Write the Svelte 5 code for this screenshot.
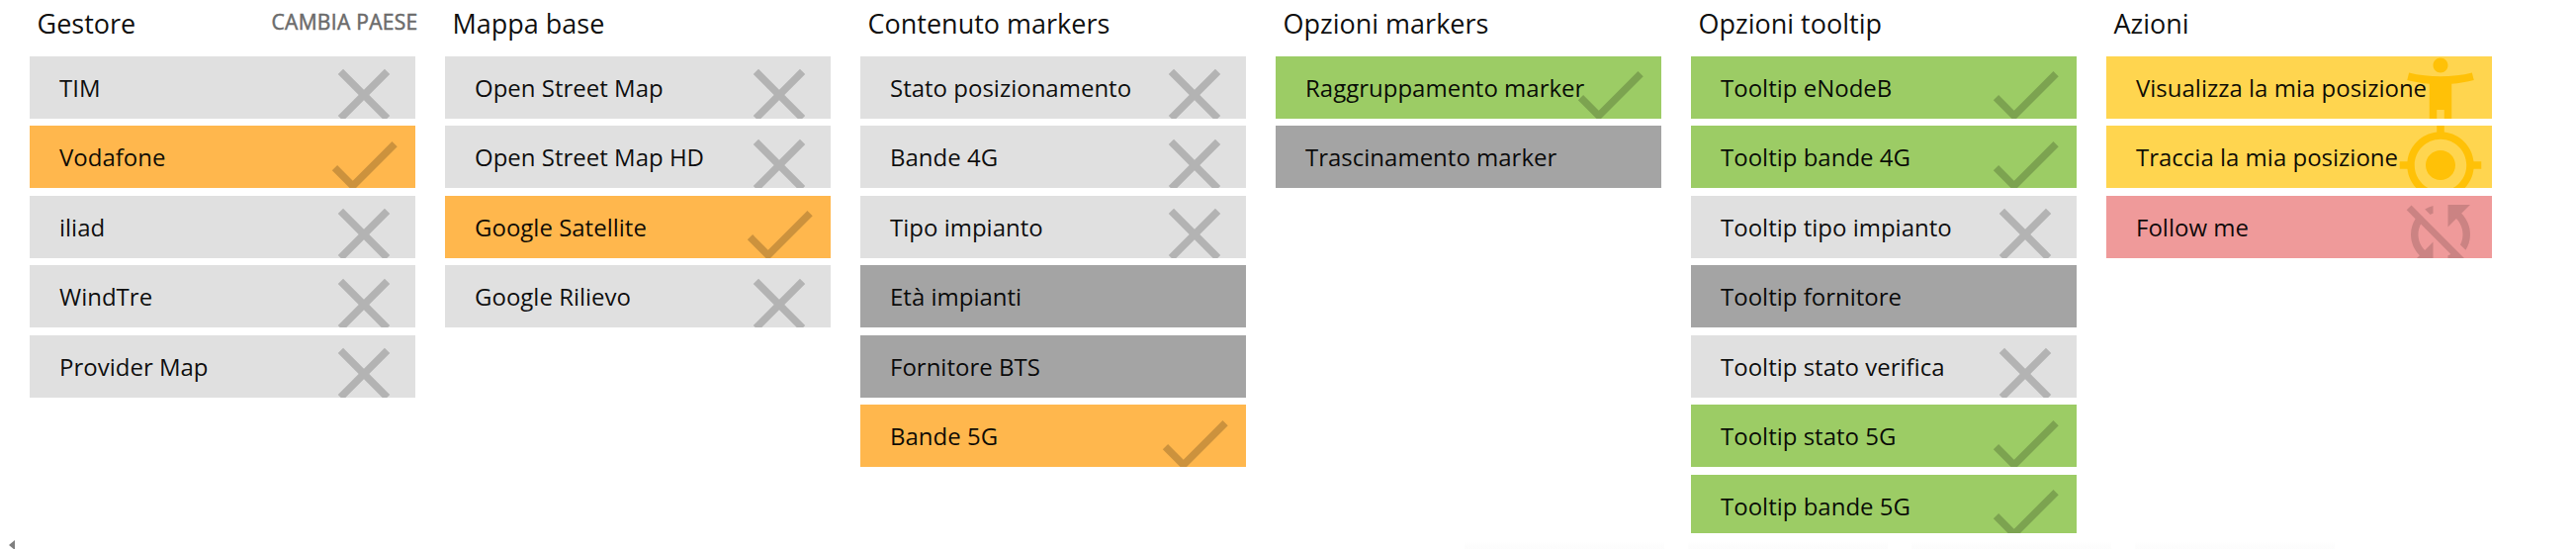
<script>
  const icons = {
    off: 'M19 6.41L17.59 5 12 10.59 6.41 5 5 6.41 10.59 12 5 17.59 6.41 19 12 13.41 17.59 19 19 17.59 13.41 12z',
    on: 'M9 16.17L4.83 12l-1.42 1.41L9 19 21 7l-1.41-1.41z',
    person: 'M20.5 6c-2.61.7-5.67 1-8.5 1s-5.89-.3-8.5-1L3 8c1.86.5 4 .83 6 1v13h2v-6h2v6h2V9c2-.17 4.14-.5 6-1l-.5-2zM12 6c1.1 0 2-.9 2-2s-.9-2-2-2-2 .9-2 2 .9 2 2 2z',
    locate: 'M12 8c-2.21 0-4 1.79-4 4s1.79 4 4 4 4-1.79 4-4-1.79-4-4-4zm8.94 3c-.46-4.17-3.77-7.48-7.94-7.94V1h-2v2.06C6.83 3.52 3.52 6.83 3.06 11H1v2h2.06c.46 4.17 3.77 7.48 7.94 7.94V23h2v-2.06c4.17-.46 7.48-3.77 7.94-7.94H23v-2h-2.06zM12 19c-3.87 0-7-3.13-7-7s3.13-7 7-7 7 3.13 7 7-3.13 7-7 7z',
    unsync: 'M10 6.35V4.26c-.8.21-1.55.54-2.23.96l1.46 1.46c.25-.12.5-.24.77-.33zm-7.14-.94l2.36 2.36C4.45 8.99 4 10.44 4 12c0 2.21.91 4.2 2.36 5.64L4 20h6v-6l-2.24 2.24C6.68 15.15 6 13.66 6 12c0-1 .25-1.94.68-2.77l8.08 8.08c-.25.13-.5.25-.77.34v2.09c.8-.21 1.55-.54 2.23-.96l2.36 2.36 1.27-1.27L4.14 4.14 2.86 5.41zM20 4h-6v6l2.24-2.24C17.32 8.85 18 10.34 18 12c0 1-.25 1.94-.68 2.77l1.46 1.46C19.55 15.01 20 13.56 20 12c0-2.21-.91-4.2-2.36-5.64L20 4z'
  };

  // Each item: [label, colour, icon]
  const groups = [
    { title: 'Gestore', action: 'CAMBIA PAESE', items: [
      ['TIM', 'grey', 'off'], ['Vodafone', 'orange', 'on'], ['iliad', 'grey', 'off'],
      ['WindTre', 'grey', 'off'], ['Provider Map', 'grey', 'off']] },
    { title: 'Mappa base', items: [
      ['Open Street Map', 'grey', 'off'], ['Open Street Map HD', 'grey', 'off'],
      ['Google Satellite', 'orange', 'on'], ['Google Rilievo', 'grey', 'off']] },
    { title: 'Contenuto markers', items: [
      ['Stato posizionamento', 'grey', 'off'], ['Bande 4G', 'grey', 'off'], ['Tipo impianto', 'grey', 'off'],
      ['Età impianti', 'dark'], ['Fornitore BTS', 'dark'], ['Bande 5G', 'orange', 'on']] },
    { title: 'Opzioni markers', items: [
      ['Raggruppamento marker', 'green', 'on'], ['Trascinamento marker', 'dark']] },
    { title: 'Opzioni tooltip', items: [
      ['Tooltip eNodeB', 'green', 'on'], ['Tooltip bande 4G', 'green', 'on'], ['Tooltip tipo impianto', 'grey', 'off'],
      ['Tooltip fornitore', 'dark'], ['Tooltip stato verifica', 'grey', 'off'],
      ['Tooltip stato 5G', 'green', 'on'], ['Tooltip bande 5G', 'green', 'on']] },
    { title: 'Azioni', items: [
      ['Visualizza la mia posizione', 'yellow', 'person'], ['Traccia la mia posizione', 'yellow', 'locate'],
      ['Follow me', 'red', 'unsync']] }
  ];
</script>

<main>
  <div class="groups">
    {#each groups as group}
      <section>
        <header>
          <h2>{group.title}</h2>
          {#if group.action}<button class="change">{group.action}</button>{/if}
        </header>
        <ul>
          {#each group.items as [label, colour, icon]}
            <li class={colour}>
              <span>{label}</span>
              {#if icon}<svg viewBox="0 0 24 24"><path d={icons[icon]} /></svg>{/if}
            </li>
          {/each}
        </ul>
      </section>
    {/each}
  </div>
  <footer>
    <svg class="arrow" viewBox="0 0 6 10"><path d="M6 0v10L0 5z" /></svg>
    <div class="shades"><i></i><i></i><i></i><i></i></div>
  </footer>
</main>

<style>
  :global(body) {
    background: #fff;
    overflow: hidden;
  }
  main {
    height: 555px;
    overflow: hidden;
    font-family: 'Open Sans', sans-serif;
    color: rgba(0, 0, 0, 0.95);
  }
  .groups {
    display: flex;
    gap: 30px;
    height: 539px;
    padding-left: 30px;
    overflow: hidden;
  }
  section {
    flex: 0 0 390px;
  }
  header {
    display: flex;
    justify-content: space-between;
    height: 56.9px;
    padding-left: 7.5px;
    white-space: nowrap;
  }
  h2 {
    margin: 6px 0 0;
    font-size: 27px;
    line-height: 36px;
    font-weight: 400;
  }
  .change {
    margin: 8px -2.5px 0 0;
    padding: 0;
    border: 0;
    background: none;
    font: 400 21px/29px 'Open Sans', sans-serif;
    letter-spacing: 0.3px;
    height: 29px;
    color: #6b6b6b;
    -webkit-text-stroke: 0.5px #6b6b6b;
  }
  ul {
    display: flex;
    flex-direction: column;
    gap: 7.5px;
    margin: 0;
    padding: 0;
    list-style: none;
  }
  li {
    position: relative;
    flex: none;
    box-sizing: border-box;
    height: 63px;
    padding-left: 30px;
    overflow: hidden;
    font-size: 24px;
    line-height: 63px;
    white-space: nowrap;
  }
  li svg {
    position: absolute;
    left: 75%;
    top: -5.8px;
    width: 90px;
    height: 90px;
    fill: rgba(0, 0, 0, 0.2);
  }
  .grey { background: #e0e0e0; }
  .dark { background: #a4a4a4; }
  .orange { background: #ffb74d; }
  .green { background: #9ccc65; }
  .red { background: #ef9a9a; }
  .red svg { fill: rgba(0, 0, 0, 0.15); }
  .yellow { background: #ffd54f; }
  .yellow svg { fill: #ffc107; }
  .yellow span {
    position: relative;
    z-index: 1;
  }
  footer {
    display: flex;
    height: 16px;
    padding-left: 9px;
  }
  .arrow {
    flex: none;
    width: 6px;
    height: 10px;
    margin-top: 7px;
    fill: #7f7f7f;
  }
  .shades {
    display: flex;
    gap: 24px;
    margin: 8px 0 0 1466px;
  }
  .shades i {
    width: 202px;
    height: 8px;
    background: linear-gradient(#fff, #fcfcfc);
  }
</style>
